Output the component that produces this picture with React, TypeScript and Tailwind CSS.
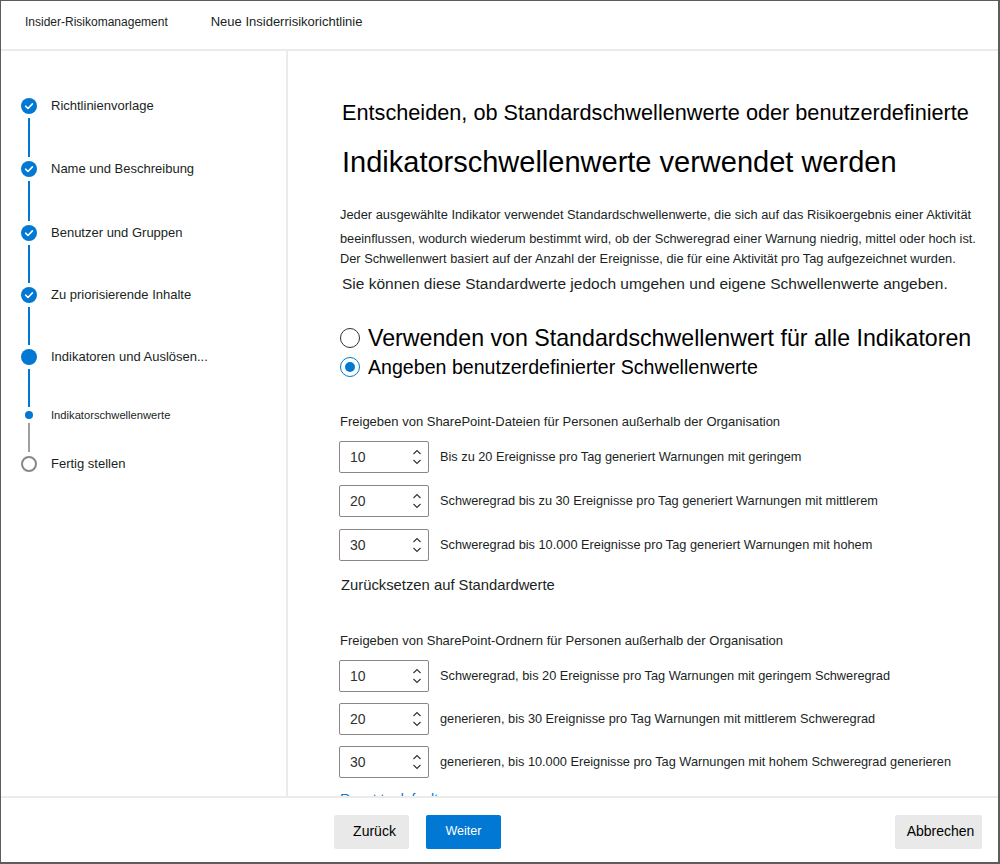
import React from "react";

const FONT = { fontFamily: '"Liberation Sans", Arial, sans-serif' };

function CheckCircle() {
  return (
    <svg width="16" height="16" viewBox="0 0 16 16">
      <circle cx="8" cy="8" r="8" fill="#0078d4" />
      <path d="M4.6 8.2 L7 10.5 L11.4 5.9" fill="none" stroke="#fff" strokeWidth="1.6" strokeLinecap="round" strokeLinejoin="round" />
    </svg>
  );
}

function Line({ h, gray }: { h: number; gray?: boolean }) {
  return (
    <div className="flex w-[16px] justify-center py-[4px]">
      <div className={gray ? "w-[2px] bg-[#a19f9d]" : "w-[2px] bg-[#0078d4]"} style={{ height: h }} />
    </div>
  );
}

function Step({ icon, label }: { icon: React.ReactNode; label: string }) {
  return (
    <div className="flex h-[16px] items-center">
      <div className="flex w-[16px] justify-center">{icon}</div>
      <div className="ml-[14px] whitespace-nowrap text-[13px] text-[#201f1e]">{label}</div>
    </div>
  );
}

function Spin({ value, label }: { value: string; label: string }) {
  return (
    <div className="flex h-[32px] items-center">
      <div className="flex h-[32px] w-[90px] items-center justify-between rounded-[2px] border border-[#8a8886] pl-[10px] pr-[6px]">
        <span className="text-[14px] text-[#323130]">{value}</span>
        <div className="flex flex-col items-center gap-[4px]">
          <svg width="10" height="6" viewBox="0 0 10 6"><path d="M1.5 5 L5 1.5 L8.5 5" fill="none" stroke="#323130" strokeWidth="1.1" /></svg>
          <svg width="10" height="6" viewBox="0 0 10 6"><path d="M1.5 1 L5 4.5 L8.5 1" fill="none" stroke="#323130" strokeWidth="1.1" /></svg>
        </div>
      </div>
      <div className="ml-[11px] whitespace-nowrap text-[12.75px] text-[#201f1e]">{label}</div>
    </div>
  );
}

export default function App() {
  return (
    <div style={FONT} className="flex h-[864px] w-[1000px] flex-col overflow-hidden border-b-2 border-l border-r-2 border-t border-[#5c5c5c] bg-white text-[#201f1e]">
      {/* header */}
      <div className="flex h-[50px] shrink-0 items-center border-b-2 border-[#edebe9] pb-[6px]">
        <div className="ml-[24px] text-[12px]">Insider-Risikomanagement</div>
        <div className="ml-[43px] text-[13px]">Neue Insiderrisikorichtlinie</div>
      </div>
      {/* body */}
      <div className="flex h-[745px] shrink-0">
        <div className="w-[287px] shrink-0 border-r-2 border-[#edebe9] pl-[20px] pt-[47px]">
          <Step icon={<CheckCircle />} label="Richtlinienvorlage" />
          <Line h={39} />
          <Step icon={<CheckCircle />} label="Name und Beschreibung" />
          <Line h={40} />
          <Step icon={<CheckCircle />} label="Benutzer und Gruppen" />
          <Line h={38} />
          <Step icon={<CheckCircle />} label="Zu priorisierende Inhalte" />
          <Line h={38} />
          <Step icon={<div className="h-[16px] w-[16px] rounded-full bg-[#0078d4]" />} label="Indikatoren und Auslösen..." />
          <Line h={38} />
          <div className="flex h-[8px] items-center">
            <div className="flex w-[16px] justify-center"><div className="h-[8px] w-[8px] rounded-full bg-[#0078d4]" /></div>
            <div className="ml-[14px] whitespace-nowrap text-[11.2px]">Indikatorschwellenwerte</div>
          </div>
          <Line h={29} gray />
          <Step icon={<div className="h-[16px] w-[16px] rounded-full border-2 border-[#8a8886]" />} label="Fertig stellen" />
        </div>
        <div className="flex-1 overflow-hidden pl-[51px]">
          <div className="ml-[3px] mt-[49px] whitespace-nowrap text-[21.7px] leading-[26px] text-black">Entscheiden, ob Standardschwellenwerte oder benutzerdefinierte</div>
          <div className="ml-[3px] mt-[18px] whitespace-nowrap text-[29px] leading-[36px] text-black">Indikatorschwellenwerte verwendet werden</div>
          <div className="ml-[1px] mt-[25px] whitespace-nowrap text-[12.85px] leading-[20px]">Jeder ausgewählte Indikator verwendet Standardschwellenwerte, die sich auf das Risikoergebnis einer Aktivität</div>
          <div className="ml-[1px] mt-[4px] whitespace-nowrap text-[12.75px] leading-[20px]">beeinflussen, wodurch wiederum bestimmt wird, ob der Schweregrad einer Warnung niedrig, mittel oder hoch ist.</div>
          <div className="ml-[1px] whitespace-nowrap text-[12.8px] leading-[20px]">Der Schwellenwert basiert auf der Anzahl der Ereignisse, die für eine Aktivität pro Tag aufgezeichnet wurden.</div>
          <div className="ml-[3px] mt-[4px] whitespace-nowrap text-[15.5px] leading-[22px]">Sie können diese Standardwerte jedoch umgehen und eigene Schwellenwerte angeben.</div>

          <div className="mt-[28px] flex h-[30px] items-center">
            <div className="ml-[1px] h-[20px] w-[20px] rounded-full border-[1.5px] border-[#323130]" />
            <div className="ml-[8px] whitespace-nowrap text-[23.2px] leading-[30px] text-black">Verwenden von Standardschwellenwert für alle Indikatoren</div>
          </div>
          <div className="flex h-[28px] items-center">
            <div className="ml-[1px] flex h-[20px] w-[20px] items-center justify-center rounded-full border-[1.5px] border-[#0078d4]">
              <div className="h-[10px] w-[10px] rounded-full bg-[#0078d4]" />
            </div>
            <div className="ml-[8px] whitespace-nowrap text-[19.6px] leading-[28px] text-black">Angeben benutzerdefinierter Schwellenwerte</div>
          </div>

          <div className="ml-[1px] mt-[31px] whitespace-nowrap text-[13px] leading-[20px]">Freigeben von SharePoint-Dateien für Personen außerhalb der Organisation</div>
          <div className="mt-[9px] flex flex-col gap-[12px]">
            <Spin value="10" label="Bis zu 20 Ereignisse pro Tag generiert Warnungen mit geringem" />
            <Spin value="20" label="Schweregrad bis zu 30 Ereignisse pro Tag generiert Warnungen mit mittlerem" />
            <Spin value="30" label="Schweregrad bis 10.000 Ereignisse pro Tag generiert Warnungen mit hohem" />
          </div>
          <div className="ml-[2px] mt-[14px] whitespace-nowrap text-[14.8px] leading-[20px]">Zurücksetzen auf Standardwerte</div>

          <div className="ml-[1px] mt-[36px] whitespace-nowrap text-[13px] leading-[20px]">Freigeben von SharePoint-Ordnern für Personen außerhalb der Organisation</div>
          <div className="mt-[9px] flex flex-col gap-[11px]">
            <Spin value="10" label="Schweregrad, bis 20 Ereignisse pro Tag Warnungen mit geringem Schweregrad" />
            <Spin value="20" label="generieren, bis 30 Ereignisse pro Tag Warnungen mit mittlerem Schweregrad" />
            <Spin value="30" label="generieren, bis 10.000 Ereignisse pro Tag Warnungen mit hohem Schweregrad generieren" />
          </div>
          <div className="ml-[1px] mt-[11px] whitespace-nowrap text-[14px] leading-[20px] text-[#0078d4]">Reset to defaults</div>
        </div>
      </div>
      {/* footer */}
      <div className="flex flex-1 items-center border-t-2 border-[#edebe9] pt-[3px]">
        <button className="ml-[333px] h-[34px] w-[75px] rounded-[2px] bg-[#e9e9e9] pl-[6px] text-[14px] text-black">Zurück</button>
        <button className="ml-[17px] h-[34px] w-[75px] rounded-[2px] bg-[#0078d4] text-[12.5px] text-white">Weiter</button>
        <button className="ml-auto mr-[16px] h-[34px] w-[87px] rounded-[2px] bg-[#e9e9e9] pl-[4px] text-[14px] text-black">Abbrechen</button>
      </div>
    </div>
  );
}
